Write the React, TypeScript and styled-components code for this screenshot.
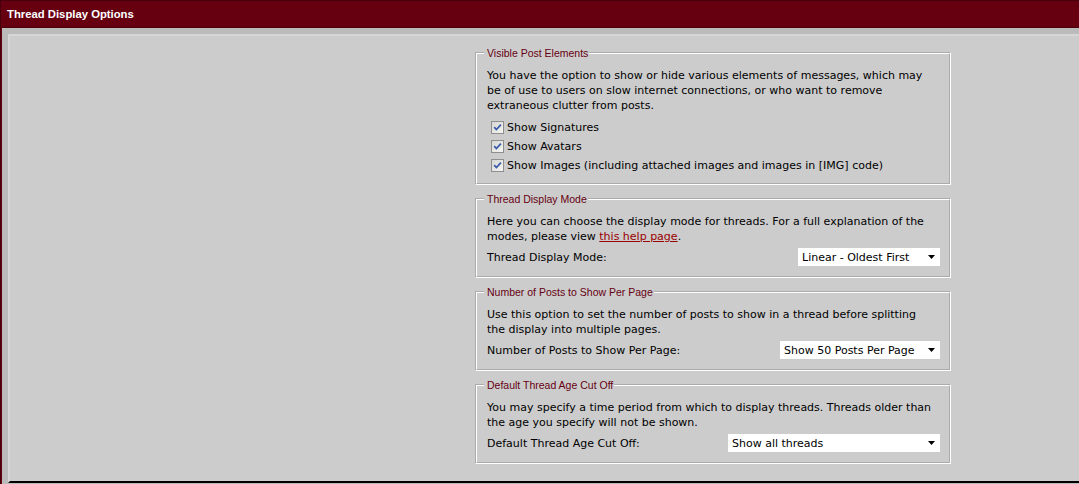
import React, { useId } from 'react';
import styled, { createGlobalStyle } from 'styled-components';

const GlobalStyle = createGlobalStyle`
  html, body {
    margin: 0;
    padding: 0;
    overflow: hidden;
    background: #bbbbbb;
  }
  body {
    font-family: "DejaVu Sans", Verdana, sans-serif;
    font-size: 11px;
    color: #000;
  }
`;

const Frame = styled.div`
  width: 1426px;
  box-sizing: border-box;
  border: 1px solid #45000b;
  padding: 1px;
  background: #660011;
`;

const Header = styled.h2`
  margin: 0;
  height: 25px;
  padding: 0 5px;
  border-bottom: 1px solid #4a000d;
  background: #660011;
  color: #ffffff;
  font: bold 11.3px "Liberation Sans", Tahoma, Arial, sans-serif;
  line-height: 25px;
`;

const Cell = styled.div`
  padding: 6px;
  background: #bbbbbb;
`;

const Panel = styled.div`
  padding: 10px;
  background: #cccccc;
  border: 2px solid;
  border-color: #d6d6d6 #000000 #000000 #d6d6d6;
`;

const Column = styled.div`
  width: 476px;
  margin: 0 auto;
`;

const Group = styled.fieldset`
  margin: 0 0 7px;
  padding: 8px 9px 8px 10px;
  border: 2px groove #ffffff;
  min-width: 0;
`;

const Legend = styled.legend`
  margin-left: -3px;
  padding: 0 1px 0 3px;
  color: #660011;
  font: 10.5px "Liberation Sans", Tahoma, Arial, sans-serif;
  line-height: 14px;
`;

const Description = styled.p`
  margin: 0;
  line-height: 15px;
`;

const HelpLink = styled.a`
  color: #990000;
  text-decoration: underline;
`;

const CheckList = styled.div`
  display: flex;
  flex-direction: column;
  margin-top: 5px;
`;

const CheckRow = styled.label`
  display: flex;
  align-items: center;
  height: 19px;
  cursor: default;
`;

const Box = styled.span`
  display: inline-flex;
  width: 13px;
  height: 13px;
  margin: 0 3px 0 4px;
`;

const SettingRow = styled.div`
  display: flex;
  align-items: center;
  justify-content: space-between;
  height: 20px;
  margin: 3px 0 1px;
`;

const SelectWrap = styled.span`
  position: relative;
  display: inline-flex;
`;

const Select = styled.select<{ $width: number }>`
  appearance: none;
  -webkit-appearance: none;
  width: ${(p) => p.$width}px;
  height: 18px;
  margin: 0;
  padding: 0 0 0 4px;
  border: 0;
  border-radius: 0;
  background: #ffffff;
  color: #000;
  font: 11px "DejaVu Sans", Verdana, sans-serif;
  outline: none;
`;

const Arrow = styled.svg`
  position: absolute;
  right: 5px;
  top: 7px;
  pointer-events: none;
`;

function CheckBox() {
  const id = useId().replace(/:/g, '');
  return (
    <Box>
      <svg width="13" height="13" viewBox="0 0 13 13">
        <defs>
          <linearGradient id={`cb${id}`} x1="0" y1="0" x2="1" y2="1">
            <stop offset="0" stopColor="#d4d4d0" />
            <stop offset="1" stopColor="#f7f7f5" />
          </linearGradient>
        </defs>
        <rect x="0.5" y="0.5" width="12" height="12" fill={`url(#cb${id})`} stroke="#8e8e8e" />
        <path d="M3.2 6.1 L5.4 8.5 L9.9 3.6" fill="none" stroke="#3b5ca8" strokeWidth="1.8" />
      </svg>
    </Box>
  );
}

function Dropdown({ width, value, options }: { width: number; value: string; options: string[] }) {
  return (
    <SelectWrap>
      <Select $width={width} defaultValue={value}>
        {options.map((o) => (
          <option key={o} value={o}>
            {o}
          </option>
        ))}
      </Select>
      <Arrow width="7" height="4" viewBox="0 0 7 4">
        <path d="M0 0 H7 L3.5 4 Z" fill="#000" />
      </Arrow>
    </SelectWrap>
  );
}

export default function App() {
  return (
    <>
      <GlobalStyle />
      <Frame>
        <Header>Thread Display Options</Header>
        <Cell>
          <Panel>
            <Column>
              <Group>
                <Legend>Visible Post Elements</Legend>
                <Description>
                  You have the option to show or hide various elements of messages, which may
                  <br />
                  be of use to users on slow internet connections, or who want to remove
                  <br />
                  extraneous clutter from posts.
                </Description>
                <CheckList>
                  <CheckRow>
                    <CheckBox />
                    Show Signatures
                  </CheckRow>
                  <CheckRow>
                    <CheckBox />
                    Show Avatars
                  </CheckRow>
                  <CheckRow>
                    <CheckBox />
                    Show Images (including attached images and images in [IMG] code)
                  </CheckRow>
                </CheckList>
              </Group>

              <Group>
                <Legend>Thread Display Mode</Legend>
                <Description>
                  Here you can choose the display mode for threads. For a full explanation of the
                  <br />
                  modes, please view <HelpLink href="#">this help page</HelpLink>.
                </Description>
                <SettingRow>
                  <span>Thread Display Mode:</span>
                  <Dropdown
                    width={142}
                    value="Linear - Oldest First"
                    options={['Linear - Oldest First', 'Linear - Newest First', 'Threaded', 'Hybrid']}
                  />
                </SettingRow>
              </Group>

              <Group>
                <Legend>Number of Posts to Show Per Page</Legend>
                <Description>
                  Use this option to set the number of posts to show in a thread before splitting
                  <br />
                  the display into multiple pages.
                </Description>
                <SettingRow>
                  <span>Number of Posts to Show Per Page:</span>
                  <Dropdown
                    width={160}
                    value="Show 50 Posts Per Page"
                    options={[
                      'Use Forum Default',
                      'Show 5 Posts Per Page',
                      'Show 10 Posts Per Page',
                      'Show 20 Posts Per Page',
                      'Show 30 Posts Per Page',
                      'Show 40 Posts Per Page',
                      'Show 50 Posts Per Page',
                    ]}
                  />
                </SettingRow>
              </Group>

              <Group>
                <Legend>Default Thread Age Cut Off</Legend>
                <Description>
                  You may specify a time period from which to display threads. Threads older than
                  <br />
                  the age you specify will not be shown.
                </Description>
                <SettingRow>
                  <span>Default Thread Age Cut Off:</span>
                  <Dropdown
                    width={212}
                    value="Show all threads"
                    options={[
                      'Use Forum Default',
                      'Show threads from last day',
                      'Show threads from last week',
                      'Show threads from last month',
                      'Show threads from last year',
                      'Show all threads',
                    ]}
                  />
                </SettingRow>
              </Group>
            </Column>
          </Panel>
        </Cell>
      </Frame>
    </>
  );
}
